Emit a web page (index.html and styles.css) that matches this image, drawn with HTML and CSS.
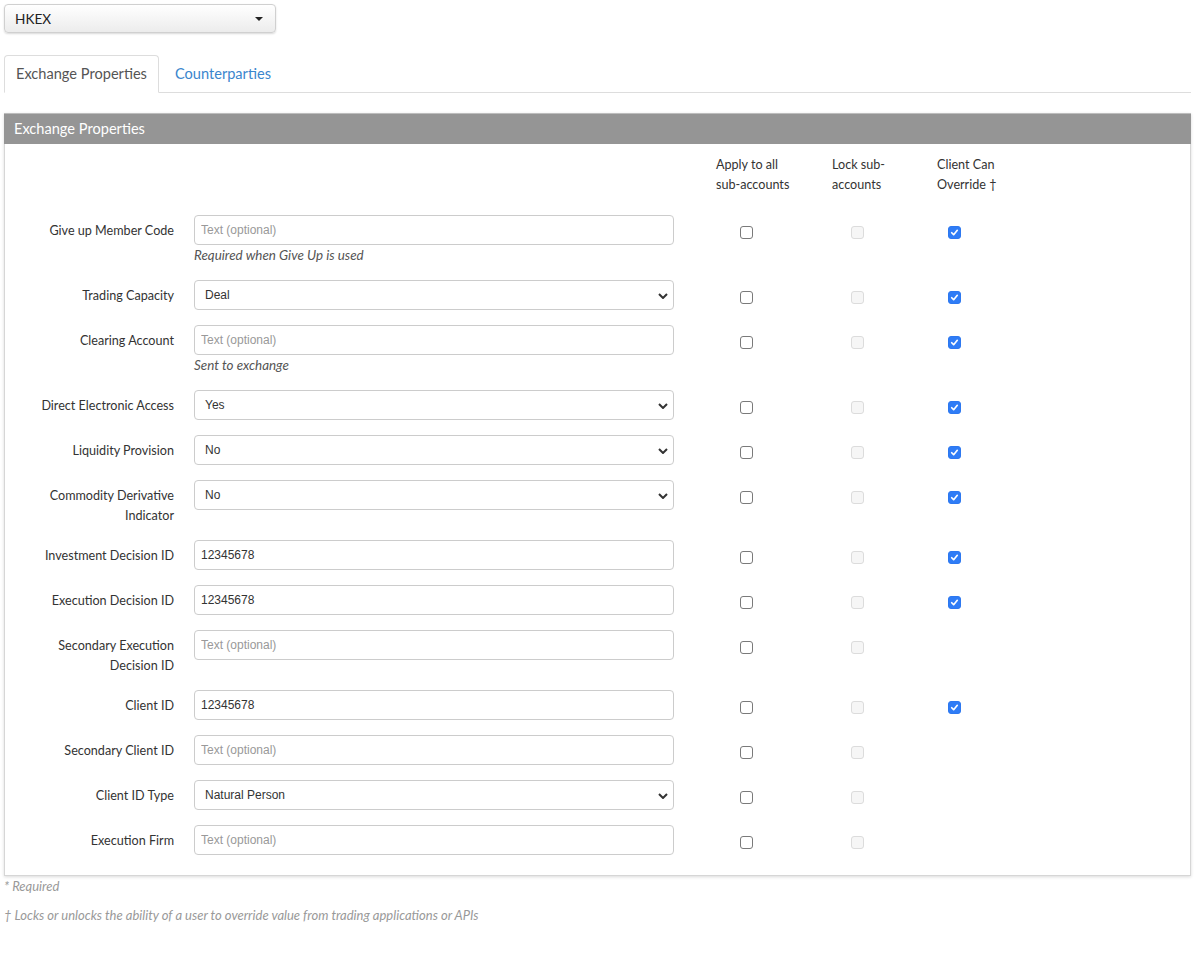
FILE: index.html
```html
<!DOCTYPE html>
<html>
  <head>
    <link rel="stylesheet" href="styles.css">
  </head>
  <body>
    <div class="exchange-picker">
      <span>HKEX</span>
      <span class="caret"></span>
    </div>

    <ul class="tabs">
      <li class="tab active">Exchange Properties</li>
      <li class="tab"><a href="#">Counterparties</a></li>
    </ul>

    <div class="panel">
      <div class="panel-heading">Exchange Properties</div>
      <div class="panel-body">
        <div class="row head-row">
          <div class="label"></div>
          <div class="field"></div>
          <div class="cell c1">Apply to all<br>sub-accounts</div>
          <div class="cell c2">Lock sub-<br>accounts</div>
          <div class="cell c3">Client Can<br>Override †</div>
        </div>

        <div class="row">
          <div class="label">Give up Member Code</div>
          <div class="field">
            <input class="control" type="text" placeholder="Text (optional)">
            <div class="help">Required when Give Up is used</div>
          </div>
          <div class="cell c1"><span class="box"></span></div>
          <div class="cell c2"><span class="box disabled"></span></div>
          <div class="cell c3"><span class="box checked"><svg viewBox="0 0 13 13"><path d="M3.2 6.8 L5.5 9.1 L9.8 3.9" /></svg></span></div>
        </div>

        <div class="row">
          <div class="label">Trading Capacity</div>
          <div class="field">
            <div class="select">Deal<svg class="chevron" viewBox="0 0 10 6"><path d="M1 1 L5 5 L9 1" /></svg></div>
          </div>
          <div class="cell c1"><span class="box"></span></div>
          <div class="cell c2"><span class="box disabled"></span></div>
          <div class="cell c3"><span class="box checked"><svg viewBox="0 0 13 13"><path d="M3.2 6.8 L5.5 9.1 L9.8 3.9" /></svg></span></div>
        </div>

        <div class="row">
          <div class="label">Clearing Account</div>
          <div class="field">
            <input class="control" type="text" placeholder="Text (optional)">
            <div class="help">Sent to exchange</div>
          </div>
          <div class="cell c1"><span class="box"></span></div>
          <div class="cell c2"><span class="box disabled"></span></div>
          <div class="cell c3"><span class="box checked"><svg viewBox="0 0 13 13"><path d="M3.2 6.8 L5.5 9.1 L9.8 3.9" /></svg></span></div>
        </div>

        <div class="row">
          <div class="label">Direct Electronic Access</div>
          <div class="field">
            <div class="select">Yes<svg class="chevron" viewBox="0 0 10 6"><path d="M1 1 L5 5 L9 1" /></svg></div>
          </div>
          <div class="cell c1"><span class="box"></span></div>
          <div class="cell c2"><span class="box disabled"></span></div>
          <div class="cell c3"><span class="box checked"><svg viewBox="0 0 13 13"><path d="M3.2 6.8 L5.5 9.1 L9.8 3.9" /></svg></span></div>
        </div>

        <div class="row">
          <div class="label">Liquidity Provision</div>
          <div class="field">
            <div class="select">No<svg class="chevron" viewBox="0 0 10 6"><path d="M1 1 L5 5 L9 1" /></svg></div>
          </div>
          <div class="cell c1"><span class="box"></span></div>
          <div class="cell c2"><span class="box disabled"></span></div>
          <div class="cell c3"><span class="box checked"><svg viewBox="0 0 13 13"><path d="M3.2 6.8 L5.5 9.1 L9.8 3.9" /></svg></span></div>
        </div>

        <div class="row">
          <div class="label">Commodity Derivative<br>Indicator</div>
          <div class="field">
            <div class="select">No<svg class="chevron" viewBox="0 0 10 6"><path d="M1 1 L5 5 L9 1" /></svg></div>
          </div>
          <div class="cell c1"><span class="box"></span></div>
          <div class="cell c2"><span class="box disabled"></span></div>
          <div class="cell c3"><span class="box checked"><svg viewBox="0 0 13 13"><path d="M3.2 6.8 L5.5 9.1 L9.8 3.9" /></svg></span></div>
        </div>

        <div class="row">
          <div class="label">Investment Decision ID</div>
          <div class="field">
            <input class="control" type="text" value="12345678">
          </div>
          <div class="cell c1"><span class="box"></span></div>
          <div class="cell c2"><span class="box disabled"></span></div>
          <div class="cell c3"><span class="box checked"><svg viewBox="0 0 13 13"><path d="M3.2 6.8 L5.5 9.1 L9.8 3.9" /></svg></span></div>
        </div>

        <div class="row">
          <div class="label">Execution Decision ID</div>
          <div class="field">
            <input class="control" type="text" value="12345678">
          </div>
          <div class="cell c1"><span class="box"></span></div>
          <div class="cell c2"><span class="box disabled"></span></div>
          <div class="cell c3"><span class="box checked"><svg viewBox="0 0 13 13"><path d="M3.2 6.8 L5.5 9.1 L9.8 3.9" /></svg></span></div>
        </div>

        <div class="row">
          <div class="label">Secondary Execution<br>Decision ID</div>
          <div class="field">
            <input class="control" type="text" placeholder="Text (optional)">
          </div>
          <div class="cell c1"><span class="box"></span></div>
          <div class="cell c2"><span class="box disabled"></span></div>
          <div class="cell c3"></div>
        </div>

        <div class="row">
          <div class="label">Client ID</div>
          <div class="field">
            <input class="control" type="text" value="12345678">
          </div>
          <div class="cell c1"><span class="box"></span></div>
          <div class="cell c2"><span class="box disabled"></span></div>
          <div class="cell c3"><span class="box checked"><svg viewBox="0 0 13 13"><path d="M3.2 6.8 L5.5 9.1 L9.8 3.9" /></svg></span></div>
        </div>

        <div class="row">
          <div class="label">Secondary Client ID</div>
          <div class="field">
            <input class="control" type="text" placeholder="Text (optional)">
          </div>
          <div class="cell c1"><span class="box"></span></div>
          <div class="cell c2"><span class="box disabled"></span></div>
          <div class="cell c3"></div>
        </div>

        <div class="row">
          <div class="label">Client ID Type</div>
          <div class="field">
            <div class="select">Natural Person<svg class="chevron" viewBox="0 0 10 6"><path d="M1 1 L5 5 L9 1" /></svg></div>
          </div>
          <div class="cell c1"><span class="box"></span></div>
          <div class="cell c2"><span class="box disabled"></span></div>
          <div class="cell c3"></div>
        </div>

        <div class="row">
          <div class="label">Execution Firm</div>
          <div class="field">
            <input class="control" type="text" placeholder="Text (optional)">
          </div>
          <div class="cell c1"><span class="box"></span></div>
          <div class="cell c2"><span class="box disabled"></span></div>
          <div class="cell c3"></div>
        </div>
      </div>
    </div>

    <p class="note first">* Required</p>
    <p class="note">† Locks or unlocks the ability of a user to override value from trading applications or APIs</p>
  </body>
</html>
```

FILE: styles.css
```css
body {
  margin: 0;
  padding: 4px 5px 40px 4px;
  background-color: #fff;
  color: #333;
  font-family: Lato, "Open Sans", sans-serif;
  font-size: 12.6px;
}

/* exchange dropdown */
.exchange-picker {
  width: 272px;
  height: 29px;
  box-sizing: border-box;
  display: flex;
  align-items: center;
  justify-content: space-between;
  padding: 0 12px 0 10px;
  border: 1px solid #d0d0d0;
  border-radius: 4px;
  background: linear-gradient(#ffffff, #ececec);
  box-shadow: 0 1px 2px rgba(0, 0, 0, 0.15);
  font-size: 13.6px;
  color: #222;
}

.caret {
  width: 0;
  height: 0;
  border-left: 4px solid transparent;
  border-right: 4px solid transparent;
  border-top: 4px solid #222;
}

/* tabs */
.tabs {
  display: flex;
  list-style: none;
  margin: 22px 0 0 0;
  padding: 0;
  border-bottom: 1px solid #ddd;
}

.tab {
  height: 36px;
  line-height: 35px;
  padding: 0 11px;
  margin-right: 3px;
  margin-bottom: -1px;
  border: 1px solid transparent;
  border-radius: 4px 4px 0 0;
  font-size: 14.6px;
}

.tab + .tab {
  padding-left: 12px;
}

.tab.active {
  border-color: #ddd;
  border-bottom-color: #fff;
  background-color: #fff;
  color: #555;
}

.tab a {
  color: #3a86cd;
  text-decoration: none;
}

/* panel */
.panel {
  margin-top: 20px;
  border: 1px solid #d6d6d6;
  border-top: none;
  box-shadow: 0 1px 3px rgba(0, 0, 0, 0.15);
}

.panel-heading {
  height: 30px;
  line-height: 30px;
  padding-left: 10px;
  margin: 0 -1px;
  background-color: #959595;
  border-top: 1px solid #bdbdbd;
  color: #fff;
  font-size: 14.6px;
}

.panel-body {
  padding: 10px 0 5px 0;
}

.row {
  display: flex;
  align-items: flex-start;
  margin-bottom: 15px;
}

.head-row {
  margin-bottom: 20px;
  padding-top: 1px;
  line-height: 20px;
}

.label {
  width: 169px;
  flex-shrink: 0;
  padding-top: 6px;
  margin-bottom: -1px;
  line-height: 20px;
  text-align: right;
  color: #333;
}

.field {
  width: 480px;
  flex-shrink: 0;
  margin-left: 20px;
}

.control,
.select {
  display: block;
  width: 100%;
  height: 30px;
  box-sizing: border-box;
  margin: 0;
  padding: 0 6px;
  border: 1px solid #ccc;
  border-radius: 4px;
  background-color: #fff;
  font-family: "Liberation Sans", Arial, sans-serif;
  font-size: 12px;
  color: #333;
  outline: none;
}

.control::placeholder {
  color: #999;
}

.select {
  position: relative;
  line-height: 28px;
  padding-left: 10px;
}

.chevron {
  position: absolute;
  right: 5px;
  top: 12px;
  width: 10px;
  height: 6px;
  fill: none;
  stroke: #333;
  stroke-width: 2;
}

.help {
  height: 20px;
  line-height: 20px;
  font-size: 13.4px;
  font-style: italic;
  color: #555;
}

.cell {
  flex-shrink: 0;
}

.c1 {
  width: 116px;
  margin-left: 42px;
}

.c2 {
  width: 105px;
}

.row .c1 .box {
  margin-left: 24px;
}

.row .c2 .box {
  margin-left: 19px;
}

.row .c3 .box {
  margin-left: 11px;
}

/* checkboxes */
.box {
  display: block;
  width: 13px;
  height: 13px;
  box-sizing: border-box;
  margin-top: 11px;
  border: 1px solid #7a7a7a;
  border-radius: 3px;
  background-color: #fff;
}

.box.disabled {
  border-color: #dcdcdc;
  background-color: #f6f6f6;
}

.box.checked {
  border-color: #2d78f0;
  background-color: #2f7cf6;
}

.box svg {
  display: block;
  width: 11px;
  height: 11px;
  fill: none;
  stroke: #fff;
  stroke-width: 2;
  stroke-linecap: round;
  stroke-linejoin: round;
}

/* footnotes */
.note {
  margin: 12px 0 0 0;
  line-height: 17px;
  font-size: 13px;
  font-style: italic;
  color: #999;
}

.note.first {
  margin-top: 2px;
}
```
